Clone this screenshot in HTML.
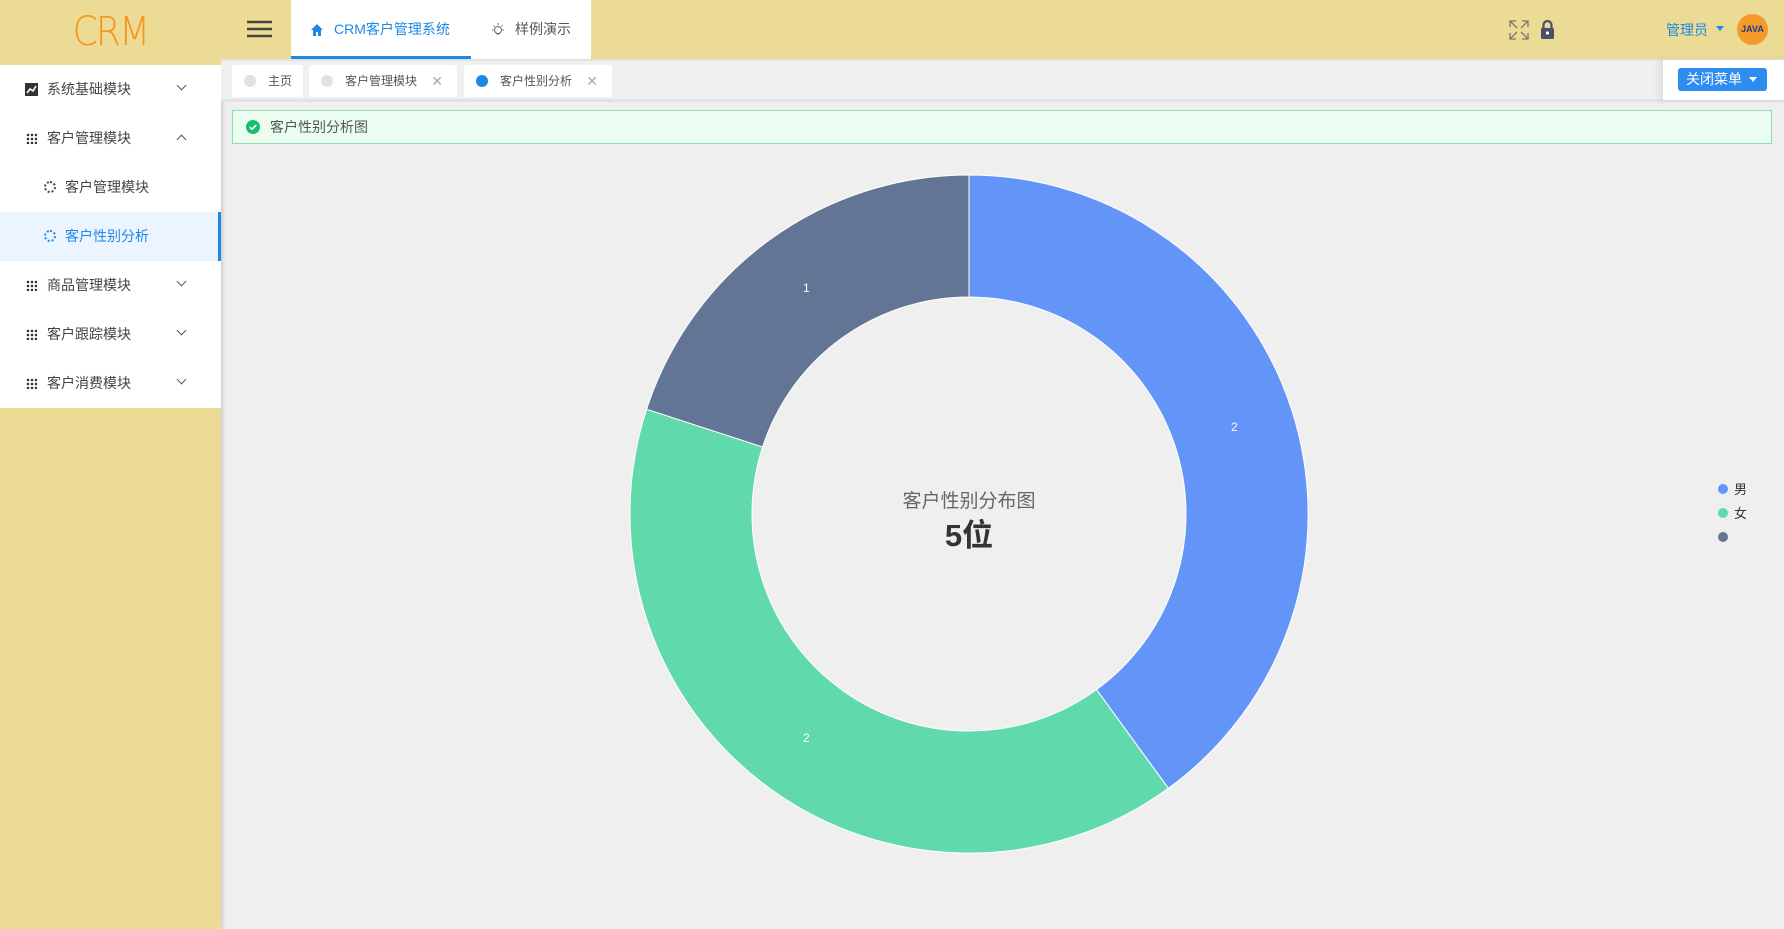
<!DOCTYPE html>
<html><head><meta charset="utf-8"><style>
*{margin:0;padding:0;box-sizing:border-box}
body{width:1784px;height:929px;overflow:hidden;background:#efefef;font-family:"Liberation Sans","Noto Sans CJK SC",sans-serif;position:relative}
.abs{position:absolute}
.side{left:0;top:0;width:221px;height:929px;background:#ebdb94;box-shadow:2px 0 4px rgba(0,0,0,.15)}
.logo{left:0;top:0;width:221px;height:65px;text-align:center;font-size:40px;color:#f7931e;line-height:65px;font-family:"DejaVu Sans",sans-serif;font-weight:200;letter-spacing:-2px;transform:scaleX(.9)}
.menu{left:0;top:65px;width:221px;background:#fff}
.mi{height:49px;line-height:49px;font-size:14px;color:#444;position:relative;padding-left:47px}
.mi .ic{position:absolute;left:26px;top:19px;width:11px;height:11px;background:
radial-gradient(circle,#333 1.2px,transparent 1.4px) 0 0/4px 4px}
.mi .ch{position:absolute;left:178px;top:17px;width:7px;height:7px;border-right:1.5px solid #555;border-bottom:1.5px solid #555;transform:rotate(45deg)}
.mi .up{top:22px;transform:rotate(225deg)}
.sub{padding-left:65px}
.sub .ic2{position:absolute;left:44px;top:18px;width:12px;height:12px;border:2px dotted #444;border-radius:50%}
.act{background:#ecf5ff;color:#1e88e5;border-right:3px solid #1e88e5}
.act .ic2{border-color:#1e88e5}
.hdr{left:221px;top:0;width:1563px;height:59px;background:#ebdb94}
.tab1{left:291px;top:0;width:180px;height:59px;background:#fff;border-bottom:3px solid #1e88e5;color:#1e88e5;font-size:14px;line-height:59px;padding-left:43px}
.tab2{left:471px;top:0;width:120px;height:59px;background:#fff;color:#555;font-size:14px;line-height:59px;padding-left:44px}
.tabs{left:221px;top:59px;width:1563px;height:43px;background:#f0f0f0;border-bottom:3px solid #e2e2e2;border-top:2px solid #e2e2e2}
.tb{top:65px;height:32px;background:#fff;font-size:12px;color:#555;line-height:32px;border-radius:2px}
.dot{position:absolute;left:12px;top:10px;width:12px;height:12px;border-radius:50%;background:#e2e2e2}
.x{position:absolute;right:14px;top:0;color:#aaa;font-size:14px}
</style></head><body>
<div class="abs side"></div>
<div class="abs logo">CRM</div>
<div class="abs menu">
<div class="mi"><svg class="abs" style="left:25px;top:18px" width="13" height="13"><rect width="13" height="13" fill="#333"/><path d="M2 10 L5 6 L8 8 L11 3" stroke="#fff" stroke-width="1.6" fill="none"/></svg>系统基础模块<span class="ch"></span></div>
<div class="mi"><span class="ic"></span>客户管理模块<span class="ch up"></span></div>
<div class="mi sub"><span class="ic2"></span>客户管理模块</div>
<div class="mi sub act"><span class="ic2"></span>客户性别分析</div>
<div class="mi"><span class="ic"></span>商品管理模块<span class="ch"></span></div>
<div class="mi"><span class="ic"></span>客户跟踪模块<span class="ch"></span></div>
<div class="mi"><span class="ic"></span>客户消费模块<span class="ch"></span></div>
</div>
<div class="abs hdr"></div>
<svg class="abs" style="left:247px;top:20px" width="25" height="18"><path d="M0 2H25M0 9H25M0 16H25" stroke="#444" stroke-width="2.5"/></svg>
<div class="abs tab1"><svg class="abs" style="left:20px;top:24px" width="12" height="12"><path d="M6 0L12 6H10V12H7V8H5V12H2V6H0Z" fill="#1e88e5"/></svg>CRM客户管理系统</div>
<div class="abs tab2"><svg class="abs" style="left:20px;top:23px" width="14" height="14"><circle cx="7" cy="7" r="3.5" fill="none" stroke="#666"/><path d="M5.5 11H8.5M7 0V2M1 7H2.5M11.5 7H13M2.5 2.5L3.5 3.5M11.5 2.5L10.5 3.5" stroke="#666"/></svg>样例演示</div>
<svg class="abs" style="left:1509px;top:20px" width="20" height="20" fill="none" stroke="#777" stroke-width="1.3"><path d="M1 7V1H7M1 1L8 8M13 1H19V7M19 1L12 8M1 13V19H7M1 19L8 12M19 13V19H13M19 19L12 12"/></svg>
<svg class="abs" style="left:1540px;top:19px" width="15" height="20"><path d="M3.5 9V6a4 4 0 0 1 8 0V9" stroke="#4a5068" stroke-width="2.2" fill="none"/><rect x="1" y="9" width="13" height="11" rx="1.5" fill="#4a5068"/><circle cx="7.5" cy="14" r="1.6" fill="#fff"/></svg>
<div class="abs" style="left:1666px;top:20px;font-size:14px;color:#1e88e5">管理员</div>
<div class="abs" style="left:1716px;top:26px;border:4px solid transparent;border-top:5px solid #1e88e5"></div>
<div class="abs" style="left:1737px;top:14px;width:31px;height:31px;border-radius:50%;background:#f39a2b;color:#1d3a8a;font-size:9px;font-weight:bold;text-align:center;line-height:31px">JAVA</div>
<div class="abs tabs"></div>
<div class="abs tb" style="left:232px;width:71px;padding-left:36px"><span class="dot"></span>主页</div>
<div class="abs tb" style="left:309px;width:148px;padding-left:36px"><span class="dot"></span>客户管理模块<span class="x">✕</span></div>
<div class="abs tb" style="left:464px;width:148px;padding-left:36px"><span class="dot" style="background:#1e88e5"></span>客户性别分析<span class="x">✕</span></div>
<div class="abs" style="left:1663px;top:60px;width:121px;height:40px;background:#fff;box-shadow:-4px 0 8px rgba(0,0,0,.08)"></div>
<div class="abs" style="left:1678px;top:68px;width:89px;height:23px;background:#2d8cf0;border-radius:3px;color:#fff;font-size:14px;line-height:23px;padding-left:8px">关闭菜单<span style="position:absolute;right:10px;top:9px;border:4px solid transparent;border-top:5px solid #fff"></span></div>
<div class="abs" style="left:232px;top:110px;width:1540px;height:34px;background:#ebfdf1;border:1px solid #8ee0aa;font-size:14px;color:#555;line-height:32px;padding-left:37px"><svg class="abs" style="left:13px;top:9px" width="14" height="14"><circle cx="7" cy="7" r="7" fill="#19be6b"/><path d="M3.8 7.2L6 9.3L10.2 5" stroke="#fff" stroke-width="1.6" fill="none"/></svg>客户性别分析图</div>
<svg class="abs" style="left:0;top:0" width="1784" height="929">
<path d="M969 175A339 339 0 0 1 1168.3 788.3L1096.5 689.6A217 217 0 0 0 969 297Z" fill="#6394f8" stroke="#fff"/>
<path d="M1168.3 788.3A339 339 0 0 1 646.6 409.2L762.6 447A217 217 0 0 0 1096.5 689.6Z" fill="#61daab" stroke="#fff"/>
<path d="M646.6 409.2A339 339 0 0 1 969 175L969 297A217 217 0 0 0 762.6 447Z" fill="#637595" stroke="#fff"/>
<g font-size="12" fill="#fff" font-family="Liberation Sans"><text x="1231" y="431">2</text><text x="803" y="742">2</text><text x="803" y="292">1</text></g>
<text x="969" y="507" text-anchor="middle" font-size="19" fill="#666" font-family="Liberation Sans,Noto Sans CJK SC,sans-serif">客户性别分布图</text>
<text x="969" y="546" text-anchor="middle" font-size="31" font-weight="bold" fill="#333" font-family="Liberation Sans,Noto Sans CJK SC,sans-serif">5位</text>
<circle cx="1723" cy="489" r="5" fill="#6394f8"/><circle cx="1723" cy="513" r="5" fill="#61daab"/><circle cx="1723" cy="537" r="5" fill="#637595"/>
<g font-size="13" fill="#333" font-family="Liberation Sans,Noto Sans CJK SC,sans-serif"><text x="1734" y="494">男</text><text x="1734" y="518">女</text></g>
</svg>
</body></html>
